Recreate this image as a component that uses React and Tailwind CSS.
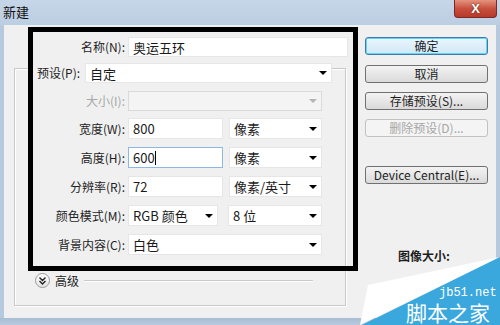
import React from 'react';

const Arrow = ({ disabled }) => (
  <span
    className={`w-0 h-0 border-l-[4px] border-r-[4px] border-t-[4px] border-l-transparent border-r-transparent ${
      disabled ? 'border-t-[#b4b4b4]' : 'border-t-black'
    }`}
  />
);

const Select = ({ value, width, disabled }) => (
  <div
    className={`${width} h-full flex items-center justify-between pl-[4px] pr-[4px] border ${
      disabled ? 'bg-[#f4f4f4] border-[#dadada]' : 'bg-white border-[#e6e6e6]'
    }`}
  >
    <span className="text-[13px] leading-none text-[#1a1a1a]">{value}</span>
    <Arrow disabled={disabled} />
  </div>
);

const Input = ({ value, width, focused }) => (
  <div
    className={`${width} h-full flex items-center pl-[4px] bg-white border ${
      focused ? 'border-[#8cb8e6]' : 'border-[#e6e6e6]'
    }`}
  >
    <span className="text-[13px] leading-none text-[#1a1a1a]">{value}</span>
    {focused && <span className="w-px h-[14px] bg-black" />}
  </div>
);

const Row = ({ label, disabled, children, className }) => (
  <div className={`flex items-center h-[21px] ${className}`}>
    <div
      className={`w-[110px] text-right text-[12px] leading-none ${
        disabled ? 'text-[#a8a8a8]' : 'text-[#1e1e1e]'
      }`}
    >
      {label}
    </div>
    <div className="ml-[3px] flex h-full">{children}</div>
  </div>
);

const Button = ({ children, primary, disabled, className }) => (
  <div
    className={`h-[18px] w-[123px] flex items-center justify-center rounded-[3px] border text-[12px] leading-none ${className} ${
      primary
        ? 'border-[#3d7bad] bg-gradient-to-b from-[#eaf6fd] to-[#d1e8f6] shadow-[inset_0_0_0_1px_#62d5f5] text-[#1e1e1e]'
        : disabled
        ? 'border-[#bfc3c6] bg-[#f4f4f4] text-[#a6a6a6]'
        : 'border-[#707070] bg-gradient-to-b from-[#f3f3f3] to-[#dadada] text-[#1e1e1e]'
    }`}
  >
    {children}
  </div>
);

export default function App() {
  return (
    <div className="w-[500px] h-[325px] relative overflow-hidden bg-[#f0f0f0] font-['Noto_Sans_CJK_SC','Liberation_Sans',sans-serif]">
      {/* title bar */}
      <div className="h-[25px] flex items-start bg-gradient-to-b from-[#c6d6e8] to-[#bccee2]">
        <span className="pl-[3px] pt-[5px] text-[13px] leading-none text-[#111]">新建</span>
        <div className="ml-auto mr-[3px] w-[43px] h-[18px] rounded-b-[4px] border border-t-0 border-[#7a2a22] bg-gradient-to-b from-[#e3937f] via-[#c8503d] to-[#b7392a] flex items-center justify-center">
          <span className="text-white font-bold text-[13px] leading-none font-['Liberation_Sans',sans-serif] [text-shadow:0_0_2px_#5a1a12]">X</span>
        </div>
      </div>

      {/* body */}
      <div className="flex h-[293px] border-l-[4px] border-r-[4px] border-[#b6c9de]">
        {/* left column */}
        <div className="w-[357px] flex flex-col">
          <div className="flex items-center h-[20px] mt-[12px]">
            <div className="w-[121px] text-right text-[12px] leading-none text-[#1e1e1e]">名称(N):</div>
            <div className="ml-[3px] h-full">
              <Input value="奥运五环" width="w-[220px]" />
            </div>
          </div>

          {/* preset group box */}
          <div className="ml-[10px] mt-[11px] w-[332px] h-[238px] border border-[#c9c9c9] shadow-[inset_1px_1px_0_#fff,1px_1px_0_#fff] flex flex-col">
            <div className="flex items-center h-[20px] -mt-[6px]">
              <div className="ml-[18px] w-[52px] h-full flex items-center pl-[4px] bg-[#f0f0f0] text-[12px] leading-none text-[#1e1e1e]">
                预设(P):
              </div>
              <div className="h-full">
                <Select value="自定" width="w-[247px]" />
              </div>
            </div>

            <Row label="大小(I):" disabled className="mt-[8px] !h-[20px]">
              <Select value="" width="w-[194px]" disabled />
            </Row>

            <Row label="宽度(W):" className="mt-[7px]">
              <Input value="800" width="w-[95px]" />
              <div className="ml-[6px] h-full">
                <Select value="像素" width="w-[93px]" />
              </div>
            </Row>

            <Row label="高度(H):" className="mt-[8px]">
              <Input value="600" width="w-[95px]" focused />
              <div className="ml-[6px] h-full">
                <Select value="像素" width="w-[93px]" />
              </div>
            </Row>

            <Row label="分辨率(R):" className="mt-[8px]">
              <Input value="72" width="w-[95px]" />
              <div className="ml-[6px] h-full">
                <Select value="像素/英寸" width="w-[93px]" />
              </div>
            </Row>

            <Row label="颜色模式(M):" className="mt-[8px]">
              <Select value="RGB 颜色" width="w-[90px]" />
              <div className="ml-[10px] h-full">
                <Select value="8 位" width="w-[94px]" />
              </div>
            </Row>

            <Row label="背景内容(C):" className="mt-[8px]">
              <Select value="白色" width="w-[194px]" />
            </Row>

            <div className="flex items-center h-[15px] mt-[18px]">
              <div className="ml-[20px] w-[15px] h-[15px] rounded-full border border-[#9a9a9a] bg-gradient-to-b from-white to-[#e4e4e4] flex items-center justify-center">
                <svg width="7" height="8" viewBox="0 0 7 8">
                  <path d="M0.5 0.5 L3.5 3.5 L6.5 0.5 M0.5 4 L3.5 7 L6.5 4" fill="none" stroke="#222" strokeWidth="1.4" />
                </svg>
              </div>
              <span className="ml-[5px] text-[12px] leading-none text-[#1e1e1e]">高级</span>
              <div className="ml-[5px] mr-[32px] flex-1 h-[2px] border-t border-[#c9c9c9] border-b border-b-white" />
            </div>
          </div>
        </div>

        {/* right column */}
        <div className="ml-[4px] flex flex-col">
          <Button primary className="mt-[12px]">确定</Button>
          <Button className="mt-[10px]">取消</Button>
          <Button className="mt-[9px]">存储预设(S)...</Button>
          <Button disabled className="mt-[9px]">删除预设(D)...</Button>
          <Button className="mt-[29px]">Device Central(E)...</Button>
          <span className="ml-[33px] mt-[66px] text-[12px] leading-none font-bold text-[#1e1e1e]">图像大小:</span>
        </div>
      </div>
      <div className="h-[7px] bg-gradient-to-b from-[#a9bdd3] to-[#b8cadf]" />

      {/* annotation rectangle */}
      <div className="absolute left-[28px] top-[27px] w-[330px] h-[244px] border-[5px] border-black pointer-events-none" />

      {/* watermark */}
      <svg className="absolute left-0 top-0" width="500" height="325" viewBox="0 0 500 325">
        <polygon points="368,285 500,257 360,325" fill="#ffffff" />
        <polygon points="500,257 500,325 362,325" fill="#3aa7dd" />
      </svg>
      <span className="absolute left-[439px] top-[287px] text-[12px] leading-none text-white font-['Liberation_Mono',monospace]">jb51.net</span>
      <span className="absolute left-[406px] top-[302px] text-[21px] leading-none text-white font-['Noto_Sans_CJK_SC',sans-serif]">脚本之家</span>
    </div>
  );
}
